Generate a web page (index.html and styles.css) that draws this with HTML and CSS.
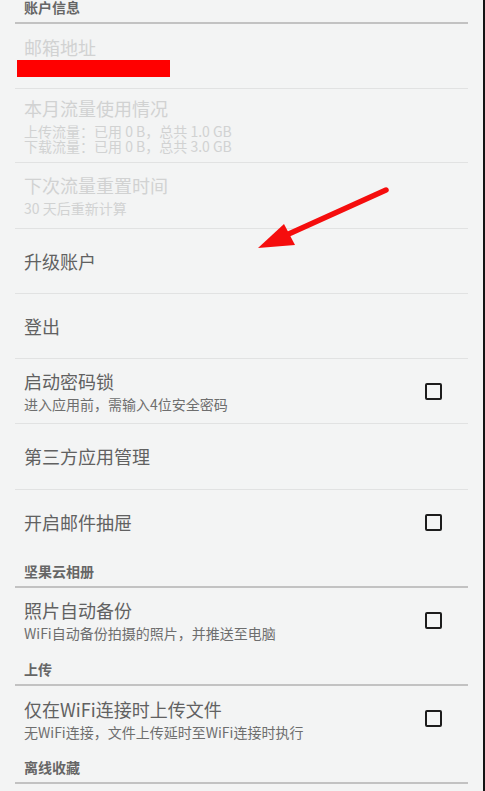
FILE: index.html
```html
<!DOCTYPE html>
<html lang="zh-CN">
<head>
<meta charset="utf-8">
<title>设置</title>
<link rel="stylesheet" href="styles.css">
</head>
<body>
<div class="screen">
  <div class="list">
    <div class="cat">账户信息</div>
    <div class="item disabled">
      <div class="text">
        <div class="title">邮箱地址</div>
        <div class="redact"></div>
      </div>
    </div>
    <div class="item disabled tall">
      <div class="text">
        <div class="title">本月流量使用情况</div>
        <div class="sub multi">上传流量：已用 0 B，总共 1.0 GB<br>下载流量：已用 0 B，总共 3.0 GB</div>
      </div>
    </div>
    <div class="item disabled">
      <div class="text">
        <div class="title">下次流量重置时间</div>
        <div class="sub">30 天后重新计算</div>
      </div>
    </div>
    <div class="item">
      <div class="text"><div class="title">升级账户</div></div>
    </div>
    <div class="item">
      <div class="text"><div class="title">登出</div></div>
    </div>
    <div class="item">
      <div class="text">
        <div class="title">启动密码锁</div>
        <div class="sub">进入应用前，需输入4位安全密码</div>
      </div>
      <span class="check"></span>
    </div>
    <div class="item">
      <div class="text"><div class="title">第三方应用管理</div></div>
    </div>
    <div class="item last">
      <div class="text"><div class="title">开启邮件抽屉</div></div>
      <span class="check"></span>
    </div>
    <div class="cat">坚果云相册</div>
    <div class="item last">
      <div class="text">
        <div class="title">照片自动备份</div>
        <div class="sub">WiFi自动备份拍摄的照片，并推送至电脑</div>
      </div>
      <span class="check"></span>
    </div>
    <div class="cat">上传</div>
    <div class="item last">
      <div class="text">
        <div class="title">仅在WiFi连接时上传文件</div>
        <div class="sub">无WiFi连接，文件上传延时至WiFi连接时执行</div>
      </div>
      <span class="check"></span>
    </div>
    <div class="cat">离线收藏</div>
  </div>
  <svg class="arrow" width="485" height="791" viewBox="0 0 485 791" aria-hidden="true">
    <line x1="386" y1="190" x2="282" y2="237" stroke="#f50d0d" stroke-width="5.5" stroke-linecap="round"/>
    <polygon points="258,248 284,224 295,245" fill="#f50d0d"/>
  </svg>
</div>
</body>
</html>
```

FILE: styles.css
```css
html, body {
  margin: 0;
  padding: 0;
}

body {
  width: 485px;
  height: 791px;
  overflow: hidden;
  background: #f3f4f4;
  font-family: "Noto Sans CJK SC", "Noto Sans", sans-serif;
}

.screen {
  position: relative;
  width: 483px;
  height: 791px;
  border-right: 2px solid #141414;
  overflow: hidden;
}

.list {
  margin: -9px 0 0 15px;
  width: 453px;
}

.cat {
  height: 33px;
  display: flex;
  align-items: center;
  padding: 1px 0 0 9px;
  box-sizing: border-box;
  border-bottom: 2px solid #c2c2c2;
  font-size: 14px;
  font-weight: bold;
  color: #666666;
}

.item {
  display: flex;
  align-items: center;
  min-height: 64.25px;
  padding: 0 26px 0 9px;
  border-bottom: 1px solid #e1e2e2;
}

.item.last {
  border-bottom: none;
  min-height: 65.25px;
}

.item.tall {
  padding-top: 8px;
  padding-bottom: 8px;
  min-height: 57px;
}

.text {
  flex: 1;
  min-width: 0;
}

.title {
  font-size: 18px;
  line-height: 22px;
  color: #616161;
}

.sub {
  margin-top: 4px;
  font-size: 14px;
  line-height: 16px;
  color: #6e6e6e;
}

.sub.multi {
  margin-top: 5px;
  line-height: 15px;
}

.disabled .title,
.disabled .sub {
  color: #d1d2d2;
}

.redact {
  margin: 2px 0 0 -7px;
  width: 153px;
  height: 17px;
  background: #ff0000;
}

.check {
  width: 13px;
  height: 13px;
  border: 2px solid #1c1c1c;
  border-radius: 2px;
  flex: none;
}

.arrow {
  position: absolute;
  left: 0;
  top: 0;
  pointer-events: none;
}
```
